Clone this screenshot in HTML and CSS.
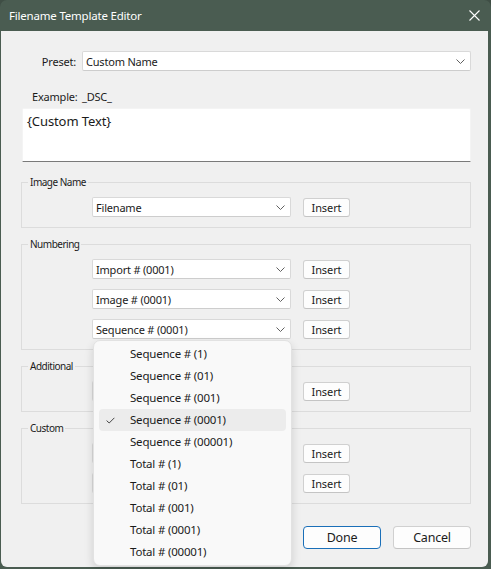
FILE: index.html
```html
<!DOCTYPE html>
<html>
<head>
<meta charset="utf-8">
<link rel="stylesheet" href="styles.css">
</head>
<body>
<div class="window">
  <div class="titlebar">
    <span class="title">Filename Template Editor</span>
    <svg class="close" width="11" height="11" viewBox="0 0 11 11"><path d="M0.5 0.5 L10.5 10.5 M10.5 0.5 L0.5 10.5" stroke="#ffffff" stroke-width="1.1" fill="none"/></svg>
  </div>
  <div class="content">
    <div class="preset-row">
      <span class="preset-label">Preset:</span>
      <div class="select grow">
        <span>Custom Name</span>
        <svg class="chev" width="9" height="5" viewBox="0 0 9 5"><path d="M0.5 0.5 L4.5 4.5 L8.5 0.5" stroke="#606060" stroke-width="1" fill="none"/></svg>
      </div>
    </div>
    <div class="example-row">
      <span class="example-label">Example:</span>
      <span>_DSC_</span>
    </div>
    <div class="textarea">{Custom Text}</div>

    <div class="group">
      <span class="legend">Image Name</span>
      <div class="row">
        <div class="select field"><span>Filename</span><svg class="chev" width="9" height="5" viewBox="0 0 9 5"><path d="M0.5 0.5 L4.5 4.5 L8.5 0.5" stroke="#606060" stroke-width="1" fill="none"/></svg></div>
        <button class="btn">Insert</button>
      </div>
    </div>

    <div class="group">
      <span class="legend">Numbering</span>
      <div class="row">
        <div class="select field"><span>Import # (0001)</span><svg class="chev" width="9" height="5" viewBox="0 0 9 5"><path d="M0.5 0.5 L4.5 4.5 L8.5 0.5" stroke="#606060" stroke-width="1" fill="none"/></svg></div>
        <button class="btn">Insert</button>
      </div>
      <div class="row">
        <div class="select field"><span>Image # (0001)</span><svg class="chev" width="9" height="5" viewBox="0 0 9 5"><path d="M0.5 0.5 L4.5 4.5 L8.5 0.5" stroke="#606060" stroke-width="1" fill="none"/></svg></div>
        <button class="btn">Insert</button>
      </div>
      <div class="row">
        <div class="select field open"><span>Sequence # (0001)</span><svg class="chev" width="9" height="5" viewBox="0 0 9 5"><path d="M0.5 0.5 L4.5 4.5 L8.5 0.5" stroke="#606060" stroke-width="1" fill="none"/></svg>
          <ul class="menu">
            <li>Sequence # (1)</li>
            <li>Sequence # (01)</li>
            <li>Sequence # (001)</li>
            <li class="selected"><svg class="check" width="9" height="7" viewBox="0 0 9 7"><path d="M0.6 3.6 L3.2 6 L8.4 0.8" stroke="#444" stroke-width="1" fill="none"/></svg>Sequence # (0001)</li>
            <li>Sequence # (00001)</li>
            <li>Total # (1)</li>
            <li>Total # (01)</li>
            <li>Total # (001)</li>
            <li>Total # (0001)</li>
            <li>Total # (00001)</li>
          </ul>
        </div>
        <button class="btn">Insert</button>
      </div>
    </div>

    <div class="group">
      <span class="legend">Additional</span>
      <div class="row">
        <div class="select field"><span></span><svg class="chev" width="9" height="5" viewBox="0 0 9 5"><path d="M0.5 0.5 L4.5 4.5 L8.5 0.5" stroke="#606060" stroke-width="1" fill="none"/></svg></div>
        <button class="btn">Insert</button>
      </div>
    </div>

    <div class="group">
      <span class="legend">Custom</span>
      <div class="row">
        <div class="input field"></div>
        <button class="btn">Insert</button>
      </div>
      <div class="row">
        <div class="select field"><span></span><svg class="chev" width="9" height="5" viewBox="0 0 9 5"><path d="M0.5 0.5 L4.5 4.5 L8.5 0.5" stroke="#606060" stroke-width="1" fill="none"/></svg></div>
        <button class="btn">Insert</button>
      </div>
    </div>

    <div class="actions">
      <button class="btn big primary">Done</button>
      <button class="btn big">Cancel</button>
    </div>
  </div>
</div>
</body>
</html>
```

FILE: styles.css
```css
* { box-sizing: border-box; }
html, body { margin: 0; padding: 0; }
body {
  width: 491px;
  height: 569px;
  background: #3f4e45;
  font-family: "Noto Sans", "Open Sans", sans-serif;
  color: #1b1b1b;
  overflow: hidden;
}
.window {
  width: 491px;
  height: 569px;
  background: #4a5c51;
  border-radius: 7px 7px 0 0;
  display: flex;
  flex-direction: column;
}
.titlebar {
  height: 31px;
  flex: none;
  display: flex;
  align-items: center;
  justify-content: space-between;
  padding: 0 11px 1px 9px;
}
.title {
  color: #ffffff;
  font-size: 11.5px;
  letter-spacing: -0.2px;
}
.close { display: block; margin-top: 1px; }
.content {
  flex: 1;
  margin: 0 3px 2px 1px;
  background: #f0f0f0;
  border-radius: 0 0 6px 6px;
  padding: 20px 17px 0 20px;
  font-size: 11px;
  letter-spacing: -0.2px;
}
.preset-row {
  display: flex;
  align-items: center;
}
.preset-label {
  width: 55px;
  margin-right: 6px;
  text-align: right;
}
.select, .input {
  height: 20px;
  background: #ffffff;
  border: 1px solid #d9d9d9;
  border-bottom-color: #cdcdcd;
  border-radius: 2px;
  display: flex;
  align-items: center;
  justify-content: space-between;
  padding: 0 5px 0 3px;
  position: relative;
  white-space: nowrap;
}
.grow { flex: 1; }
.chev { display: block; flex: none; }
.example-row {
  margin-top: 17px;
  height: 16px;
  display: flex;
  align-items: center;
  padding-left: 11px;
}
.example-label { width: 50px; }
.textarea {
  margin-top: 4px;
  margin-left: 1px;
  height: 54px;
  background: #ffffff;
  border: 1px solid #f4f4f4;
  border-bottom: 1px solid #7a7a7a;
  border-radius: 2px 2px 0 0;
  padding: 3px 4px;
  font-size: 13px;
  letter-spacing: -0.1px;
  line-height: 18px;
}
.group {
  margin-top: 16px;
  border: 1px solid #dcdcdc;
  padding: 14px 0 10px 70px;
  position: relative;
  display: flex;
  flex-direction: column;
  gap: 10px;
}
.textarea + .group { margin-top: 20px; }
.legend {
  position: absolute;
  top: -7px;
  left: 6px;
  padding: 0 2px;
  background: #f0f0f0;
  font-size: 10px;
  line-height: 13px;
  letter-spacing: -0.5px;
}
.row {
  display: flex;
  align-items: flex-start;
  gap: 12px;
}
.field { width: 199px; }
.btn {
  font-family: inherit;
  font-size: 11px;
  letter-spacing: -0.1px;
  color: #1b1b1b;
  background: #fdfdfd;
  border: 1px solid #d0d0d0;
  border-bottom-color: #c4c4c4;
  border-radius: 3px;
  height: 19px;
  width: 47px;
  margin-top: 1px;
  padding: 0;
  line-height: 17px;
}
.menu {
  list-style: none;
  margin: 0;
  padding: 2px 0;
  position: absolute;
  top: 20px;
  left: 0px;
  width: 199px;
  background: #f9f9f9;
  border: 1px solid #e2e2e2;
  border-radius: 7px;
  box-shadow: 0 4px 10px rgba(0,0,0,0.14);
  z-index: 10;
  font-size: 11.5px;
  letter-spacing: -0.2px;
}
.menu li {
  height: 22px;
  line-height: 22px;
  margin: 0 5px 0 5px;
  padding-left: 31px;
  border-radius: 4px;
  position: relative;
}
.menu li.selected { background: #ececec; }
.check {
  position: absolute;
  left: 7px;
  top: 8px;
}
.actions {
  margin-top: 22px;
  display: flex;
  justify-content: flex-end;
  gap: 12px;
}
.btn.big {
  width: 78px;
  height: 23px;
  margin-top: 0;
  font-size: 12.5px;
  letter-spacing: -0.2px;
  line-height: 21px;
  border-radius: 4px;
}
.btn.primary {
  border: 1px solid #1a6fb8;
}
```
